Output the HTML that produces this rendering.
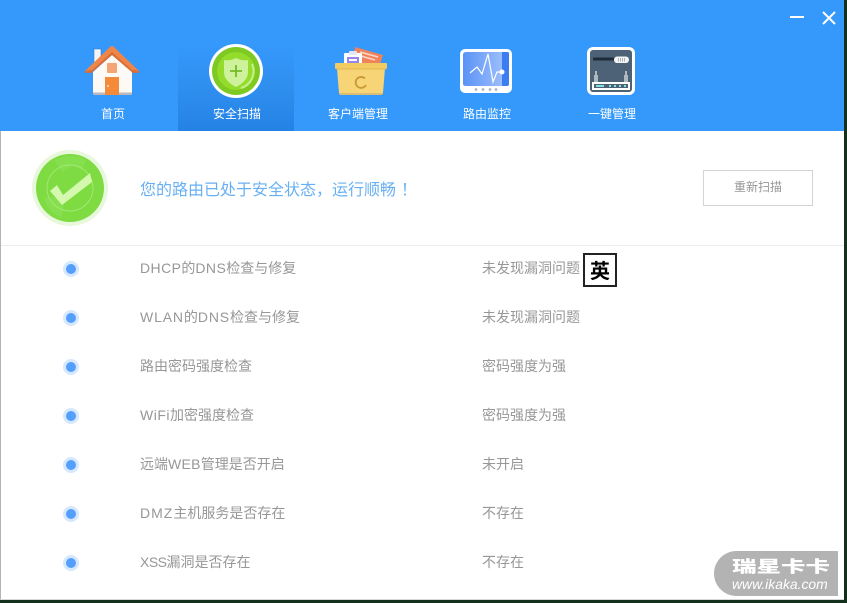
<!DOCTYPE html>
<html lang="zh-CN"><head><meta charset="utf-8"><title>安全扫描</title>
<style>
*{margin:0;padding:0;box-sizing:border-box}
html,body{width:847px;height:603px;overflow:hidden;background:#12301c}
body{position:relative;font-family:"Liberation Sans","Noto Sans CJK SC",sans-serif}
.abs{position:absolute;white-space:nowrap}
#win{position:absolute;left:0;top:0;width:844px;height:600px;background:#fff;border-left:1px solid #b4b4b4;border-bottom:1px solid #d8d8d8;overflow:hidden}
#head{position:absolute;left:-1px;top:0;width:845px;height:131px;background:#3598fb}
#tab{position:absolute;left:178px;top:44px;width:116px;height:87px;background:linear-gradient(#3598fb 0%,#2f8fef 50%,#2482e4 100%)}
.nav{position:absolute;top:106px;font-size:12px;line-height:16px;color:#fff;text-align:center;width:100px}
.dot{position:absolute;left:63px;width:16px;height:16px;border-radius:50%;background:#d6e8fd}
.dot:after{content:"";position:absolute;left:3px;top:3px;width:10px;height:10px;border-radius:50%;background:#559ffc}
.n{position:absolute;left:140px;font-size:14px;line-height:18px;color:#979797;white-space:nowrap}
.r{position:absolute;left:482px;font-size:14px;line-height:18px;color:#979797;white-space:nowrap}
svg{position:absolute;overflow:visible}
</style></head><body>
<div id="win"></div>
<div id="head"></div>
<div id="tab"></div>

<!-- window buttons -->
<div class="abs" style="left:790px;top:16px;width:14px;height:2px;background:#fff"></div>
<svg style="left:822px;top:11px" width="14" height="14" viewBox="0 0 14 14"><path d="M1 1L13 13M13 1L1 13" stroke="#fff" stroke-width="2" fill="none"/></svg>

<!-- home -->
<svg style="left:84px;top:44px" width="56" height="54" viewBox="0 0 56 54">
<path d="M10 5H17V20H10Z" fill="#f2f4f8" stroke="#2c6fb8" stroke-width=".5"/>
<path d="M9 28L28 11L48 28V49Q48 51 46 51H11Q9 51 9 49Z" fill="#fdfaf6"/>
<path d="M9 48.500H48V49Q48 51 46 51H11Q9 51 9 49Z" fill="#b9b9b9"/>
<path d="M1 27L26 3Q28 1 30 3L55 27Q55 29 52 29H49L28 11L7 29H4Q1 29 1 27Z" fill="#ef8548"/>
<path d="M1 27Q1 29 4 29H7L28 11L49 29H52Q55 29 55 27L50 26H48L28 8L8 26H6Z" fill="#d96f35"/>
<rect x="23" y="19" width="10" height="10" rx="1" fill="#f4a574"/>
<rect x="21" y="33" width="14" height="18" fill="#f58a38"/>
<circle cx="24" cy="42" r="1" fill="#fde0c4"/>
</svg>

<!-- shield -->
<svg style="left:209px;top:44px" width="54" height="54" viewBox="0 0 54 54">
<circle cx="27" cy="27" r="27" fill="#fff"/>
<circle cx="27" cy="27" r="24" fill="#7ec922"/>
<circle cx="27" cy="27" r="19" fill="#93dc2c"/>
<path d="M43 20A17.500 17.500 0 0 1 32 44" stroke="#c4ef82" stroke-width="2.200" fill="none"/>
<path d="M27 14Q33 17 39 16V28Q39 37 27 43Q15 37 15 28V16Q21 17 27 14Z" fill="#cdf29b"/>
<path d="M27 21V33M21 27H33" stroke="#74bb2a" stroke-width="1.800" fill="none"/>
</svg>

<!-- box -->
<svg style="left:334px;top:46px" width="54" height="52" viewBox="0 0 54 52">
<path d="M21 1L49 9L46 18H18Z" fill="#f0835c"/>
<path d="M26 6L44 11M27 10L41 14" stroke="#fbd8c6" stroke-width="1.500"/>
<rect x="10" y="7" width="18" height="11" rx="1" fill="#fff"/>
<rect x="15" y="5" width="8" height="4" rx="1" fill="#e5e5f5"/>
<rect x="13" y="11" width="12" height="7" fill="#9587ea"/>
<rect x="15" y="13" width="8" height="2" fill="#fff"/>
<path d="M3 22H51L49 47Q49 49 46 49H8Q5 49 5 47Z" fill="#f7d577"/>
<rect x="1" y="17" width="52" height="6" rx="1" fill="#f3cb63"/>
<path d="M2 23H52" stroke="#e0b650" stroke-width="1"/>
<path d="M5 47H49V47.500Q49 49 46 49H8Q5 49 5 47.500Z" fill="#d9bd74"/>
<path d="M31 32.500A5.500 5.500 0 1 0 32 39" stroke="#c89a35" stroke-width="1.800" fill="none"/>
</svg>

<!-- monitor -->
<svg style="left:460px;top:48px" width="52" height="46" viewBox="0 0 52 46">
<rect y="1" width="52" height="44" rx="5" fill="#fff"/>
<defs><linearGradient id="sc" x1="0" x2="1" y1="0" y2="0"><stop offset="0" stop-color="#5a92f5"/><stop offset="1" stop-color="#a6c5fc"/></linearGradient></defs>
<path d="M6 4H49V36Q49 38 47 38H6Q3 38 3 36V7Q3 4 6 4Z" fill="url(#sc)"/>
<path d="M42 4H47Q49 4 49 6V36Q49 38 47 38H42Z" fill="#3c7ef1"/>
<path d="M10 25L17 19L22 26L28 6L33 34L37 24L42 24" stroke="#fff" stroke-width="1.200" fill="none"/>
<circle cx="42" cy="24" r="2.500" fill="#fff"/>
<g fill="#aeb6c4"><circle cx="16" cy="41.500" r="1.400"/><circle cx="23" cy="41.500" r="1.400"/><circle cx="30" cy="41.500" r="1.400"/><circle cx="36" cy="41.500" r="1.400"/></g>
</svg>

<!-- router -->
<svg style="left:587px;top:47px" width="48" height="48" viewBox="0 0 48 48">
<rect width="48" height="48" rx="6" fill="#fff"/>
<rect x="3" y="3" width="42" height="42" rx="3" fill="#4d6177"/>
<rect x="6" y="10.500" width="22" height="3" fill="#1e2c3a"/>
<rect x="27" y="9.500" width="15" height="6.500" rx="3.200" fill="#f4f4f4"/>
<path d="M31.500 11V14.500M33.500 11V14.500M35.500 11V14.500M37.500 11V14.500" stroke="#9aa3ad" stroke-width=".8"/>
<path d="M7 35V28H8V24H10V28H11V35ZM37 35V28H38V24H40V28H41V35Z" fill="#aeb8bf"/>
<rect x="5" y="35" width="38" height="8" fill="#fff"/>
<rect x="7" y="37" width="34" height="4" fill="#4d6177"/>
<rect x="9" y="38" width="8" height="2" fill="#86e0dc"/>
<g fill="#86e0dc"><rect x="22" y="38" width="2" height="2"/><rect x="27" y="38" width="2" height="2"/><rect x="32" y="38" width="2" height="2"/><rect x="37" y="38" width="2" height="2"/></g>
</svg>

<div class="nav" style="left:63px">首页</div>
<div class="nav" style="left:187px">安全扫描</div>
<div class="nav" style="left:308px">客户端管理</div>
<div class="nav" style="left:437px">路由监控</div>
<div class="nav" style="left:562px">一键管理</div>

<!-- status -->
<svg style="left:32px;top:150px" width="76" height="76" viewBox="0 0 76 76">
<circle cx="38" cy="38" r="38" fill="#e8f8dc"/>
<circle cx="38" cy="38" r="34" fill="#7edb42"/>
<path d="M22 10Q38 2 54 10L50 20L40 16L30 22ZM12 48Q24 44 32 54L30 68Q16 62 12 48Z" fill="#86df4e"/>
<circle cx="38" cy="38" r="23" fill="none" stroke="#a3e873" stroke-width="1"/>
<path d="M25 35L31 45L58 23L60 32L30 55L18 41Z" fill="#d3f8ae"/>
</svg>
<div class="abs" style="left:140px;top:178px;font-size:16px;line-height:20px;color:#69b0f2">您的路由已处于安全状态<span style="font-family:'Noto Sans CJK TC',sans-serif">，</span>运行顺畅<span style="font-family:'Noto Sans CJK TC',sans-serif;padding-left:5px">！</span></div>
<div class="abs" style="left:703px;top:170px;width:110px;height:36px;border:1px solid #d4d4d4;background:#fff;font-size:12px;line-height:33px;color:#979797;text-align:center">重新扫描</div>
<div class="abs" style="left:1px;top:245px;width:843px;height:1px;background:#ececec"></div>

<!-- rows -->
<div class="dot" style="top:261px"></div><div class="n" style="top:259px"><span style="letter-spacing:.43px">DHCP</span>的<span style="letter-spacing:.43px">DNS</span>检查与修复</div><div class="r" style="top:259px">未发现漏洞问题</div>
<div class="dot" style="top:310px"></div><div class="n" style="top:308px"><span style="letter-spacing:.85px">WLAN</span>的<span style="letter-spacing:.85px">DNS</span>检查与修复</div><div class="r" style="top:308px">未发现漏洞问题</div>
<div class="dot" style="top:359px"></div><div class="n" style="top:357px">路由密码强度检查</div><div class="r" style="top:357px">密码强度为强</div>
<div class="dot" style="top:408px"></div><div class="n" style="top:406px"><span style="letter-spacing:.5px">WiFi</span>加密强度检查</div><div class="r" style="top:406px">密码强度为强</div>
<div class="dot" style="top:457px"></div><div class="n" style="top:455px">远端<span style="letter-spacing:.3px">WEB</span>管理是否开启</div><div class="r" style="top:455px">未开启</div>
<div class="dot" style="top:506px"></div><div class="n" style="top:504px"><span style="letter-spacing:1px">DMZ</span>主机服务是否存在</div><div class="r" style="top:504px">不存在</div>
<div class="dot" style="top:555px"></div><div class="n" style="top:553px"><span style="letter-spacing:-.5px">XSS</span>漏洞是否存在</div><div class="r" style="top:553px">不存在</div>

<!-- IME -->
<div class="abs" style="left:583px;top:253px;width:34px;height:34px;border:2px solid #222;background:#fff;font-size:20px;line-height:29px;font-weight:700;color:#000;text-align:center;font-family:'WenQuanYi Zen Hei','Noto Sans CJK SC',sans-serif">英</div>

<!-- watermark -->
<div class="abs" style="left:714px;top:551px;width:124px;height:45px;background:#b3b3b3;border-radius:24px 0 0 24px"></div>
<div class="abs" style="left:732px;top:558px;font-size:16px;line-height:19px;font-weight:900;color:#fff;transform:scale(1.53,1);transform-origin:0 0">瑞星卡卡</div>
<div class="abs" style="left:732px;top:576px;font-size:13.900px;line-height:16px;font-style:italic;color:#fff">www.ikaka.com</div>
</body></html>
